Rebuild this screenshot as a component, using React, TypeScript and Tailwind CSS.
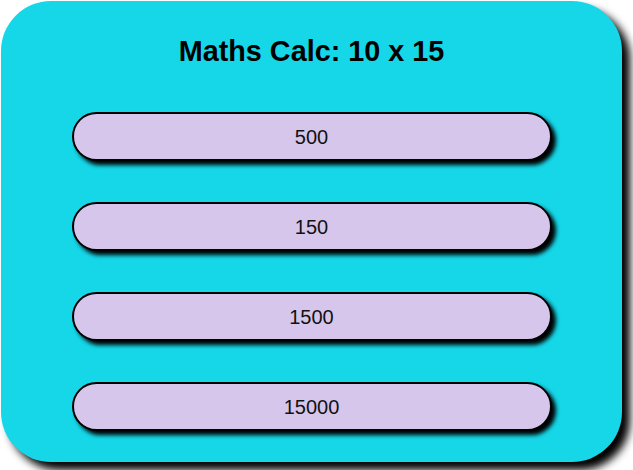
export default function App() {
  const answers = ['500', '150', '1500', '15000'];

  return (
    <div className="w-[633px] h-[470px] bg-white pl-px pt-px font-['Liberation_Sans',Arial,sans-serif]">
      <div className="w-[621px] h-[461px] rounded-[50px] bg-[#15d7e8] shadow-[8px_8px_8px_#000] flex flex-col items-center">
        <h1 className="mt-[33px] text-[28.8px] leading-[34px] font-bold text-black">Maths Calc: 10 x 15</h1>
        <div className="mt-[44px] flex flex-col gap-[41px]">
          {answers.map((a) => (
            <button
              key={a}
              className="w-[480px] h-[49px] rounded-full border-2 border-black bg-[#d6c6ec] text-[20px] text-[#111] shadow-[4px_4px_4px_#000]"
            >
              {a}
            </button>
          ))}
        </div>
      </div>
    </div>
  );
}
